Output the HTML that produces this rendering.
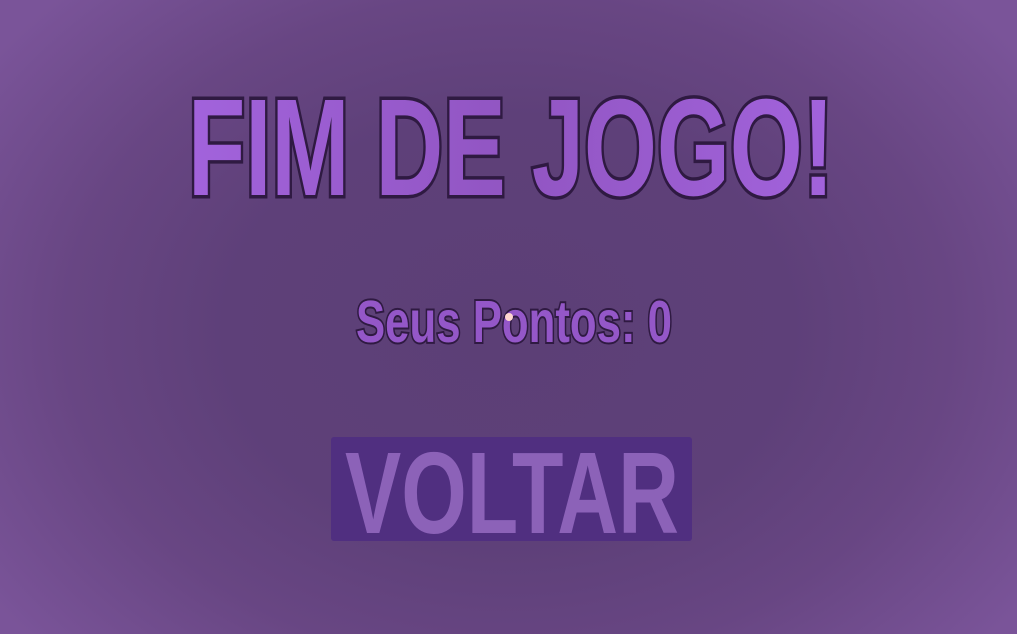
<!DOCTYPE html>
<html><head><meta charset="utf-8"><style>
html,body{margin:0;padding:0;width:1017px;height:634px;overflow:hidden}
body{background:radial-gradient(ellipse 62% 75% at 50% 52%,#5c3f76 0%,#5e4079 45%,#684683 70%,#7a5499 100%)}
</style></head><body>
<svg width="1017" height="634" viewBox="0 0 1017 634" xmlns="http://www.w3.org/2000/svg" style="position:absolute;left:0;top:0">
<defs>
<linearGradient id="g" x1="0" x2="1" y1="0" y2="0">
<stop offset="0" stop-color="#a263dc"/><stop offset="0.5" stop-color="#9155c2"/><stop offset="1" stop-color="#a263dc"/>
</linearGradient>
</defs>
<text x="188" y="195" font-family="Liberation Sans, sans-serif" font-weight="bold" font-size="138" textLength="646" lengthAdjust="spacingAndGlyphs" fill="url(#g)" stroke="#2f1a42" stroke-width="7" stroke-linejoin="miter" paint-order="stroke">FIM DE JOGO!</text>
<text x="356" y="342" font-family="Liberation Sans, sans-serif" font-weight="bold" font-size="59" textLength="316" lengthAdjust="spacingAndGlyphs" fill="#9457c8" stroke="#2f1a42" stroke-width="4" stroke-linejoin="miter" paint-order="stroke">Seus Pontos: 0</text>
<circle cx="509" cy="317" r="4" fill="#ffd6d0"/>
<rect x="331" y="437" width="361" height="104" rx="3" fill="#502f80"/>
<text x="345" y="533" font-family="Liberation Sans, sans-serif" font-weight="bold" font-size="116" textLength="334" lengthAdjust="spacingAndGlyphs" fill="#8c62b8">VOLTAR</text>
</svg>
</body></html>
